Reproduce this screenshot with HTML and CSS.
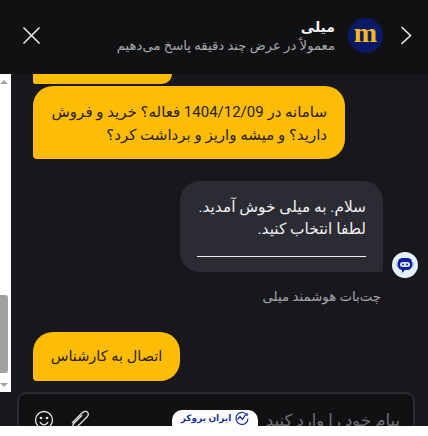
FILE: index.html
```html
<!DOCTYPE html>
<html lang="fa">

<head>
    <meta charset="UTF-8">
    <meta name="viewport" content="width=device-width, initial-scale=1.0">
    <title>میلی</title>
    <link rel="stylesheet" href="styles.css">
</head>

<body>
    <div class="widget">
        <header class="header">
            <button class="icon-button close-button" aria-label="بستن">
                <svg width="19" height="19" viewBox="0 0 19 19"><path d="M1.5 1.5 17.500 17.500M17.500 1.500 1.500 17.500" stroke="#f2f2f2" stroke-width="1.500" fill="none"/></svg>
            </button>
            <div class="agent">
                <div class="agent-name">میلی</div>
                <div class="agent-status">معمولاً در عرض چند دقیقه پاسخ می‌دهیم</div>
            </div>
            <div class="logo">m</div>
            <button class="icon-button back-button" aria-label="بازگشت">
                <svg width="12" height="19" viewBox="0 0 12 19"><path d="M1.500 1 10.500 9.500 1.500 18" stroke="#f2f2f2" stroke-width="1.500" fill="none"/></svg>
            </button>
        </header>

        <div class="body">
            <div class="scrollbar">
                <span class="arrow-up"></span>
                <div class="track"><div class="thumb"></div></div>
                <span class="arrow-down"></span>
            </div>

            <div class="messages">
                <div class="bubble-stub"></div>
                <div class="bubble user-bubble">سامانه در 1404/12/09 فعاله؟ خرید و فروش دارید؟ و میشه واریز و برداشت کرد؟</div>

                <div class="bot-row">
                    <div class="bubble bot-bubble">
                        <p>سلام. به میلی خوش آمدید. لطفا انتخاب کنید.</p>
                        <hr>
                    </div>
                    <div class="bot-avatar">
                        <svg width="18" height="18" viewBox="0 0 18 18">
                            <rect x="0.500" y="6" width="2.500" height="5" rx="1" fill="#7fa4e8"/>
                            <rect x="15" y="6" width="2.500" height="5" rx="1" fill="#7fa4e8"/>
                            <path d="M6 2h6a4.500 4.500 0 0 1 4 4.500v3a4.500 4.500 0 0 1-4.500 4.500H9l-3 3v-3a4.500 4.500 0 0 1-4-4.500v-3A4.500 4.500 0 0 1 6 2z" fill="#10209a"/>
                            <rect x="4" y="6" width="10" height="5" rx="2.500" fill="#d9e6fb"/>
                            <circle cx="7" cy="8.500" r="1" fill="#10209a"/>
                            <circle cx="11" cy="8.500" r="1" fill="#10209a"/>
                        </svg>
                    </div>
                </div>
                <div class="bot-label">چت‌بات هوشمند میلی</div>

                <button class="bubble expert-button">اتصال به کارشناس</button>
            </div>
        </div>

        <div class="composer-area">
            <div class="composer">
                <div class="composer-icons">
                    <svg width="20" height="20" viewBox="0 0 20 20" fill="none" stroke="#e4e4e4" stroke-width="1.300">
                        <circle cx="10" cy="10" r="8.500"/>
                        <circle cx="7" cy="8" r="0.700" fill="#e4e4e4"/>
                        <circle cx="13" cy="8" r="0.700" fill="#e4e4e4"/>
                        <path d="M6 12c1 2 2.500 2.800 4 2.800s3-.8 4-2.800"/>
                    </svg>
                    <svg width="20" height="22" viewBox="0 0 20 22" fill="none" stroke="#e4e4e4" stroke-width="1.300">
                        <path d="M2 13 12 3c2-2 4.500-2 5.500-.8s1 3.300-.8 5.100L7.500 16.500c-1.300 1.300-3 1.400-3.900.5s-.8-2.500.5-3.800l8-8"/>
                    </svg>
                </div>
                <div class="placeholder">پیام خود را وارد کنید</div>
            </div>
        </div>

        <footer class="footer">
            <div class="badge">
                <span>ایران بروکر</span>
                <svg width="14" height="14" viewBox="0 0 14 14" fill="none" stroke="#1a2fa8" stroke-width="1.200">
                    <path d="M12.500 5A6 6 0 1 0 13 7.500"/>
                    <path d="M2.500 8.500 5 5.500l2.500 3 2.500-4 3-2"/>
                </svg>
            </div>
        </footer>
    </div>
</body>

</html>
```

FILE: styles.css
```css
body {
    margin: 0;
    padding: 0;
    font-family: Roboto, "DejaVu Sans", sans-serif;
    background-color: #17171c;
}

.widget {
    display: flex;
    flex-direction: column;
    height: 436px;
    overflow: hidden;
    position: relative;
}

.header {
    display: flex;
    align-items: center;
    height: 74px;
    flex-shrink: 0;
    padding: 0 16px 3px 22px;
    box-sizing: border-box;
    background-color: #111114;
}

.icon-button {
    display: flex;
    padding: 0;
    border: none;
    background: none;
}

.agent {
    margin-left: auto;
    direction: rtl;
}

.agent-name {
    color: #f4f4f4;
    font-size: 14px;
    font-weight: bold;
    line-height: 20px;
}

.agent-status {
    color: #a8a8ac;
    font-size: 13.200px;
    line-height: 17px;
}

.logo {
    width: 35px;
    height: 35px;
    flex-shrink: 0;
    margin: 0 17px 0 13px;
    border-radius: 50%;
    background-color: #0b1a66;
    color: #f5b921;
    font-family: "Liberation Serif", serif;
    font-size: 28px;
    font-weight: bold;
    line-height: 30px;
    text-align: center;
}

.body {
    display: flex;
    height: 318px;
    flex-shrink: 0;
}

.scrollbar {
    display: flex;
    flex-direction: column;
    width: 11px;
    flex-shrink: 0;
    background-color: #fff;
}

.arrow-up,
.arrow-down {
    width: 0;
    margin: 6px 0 0;
    border-left: 4px solid transparent;
    border-right: 4px solid transparent;
}

.arrow-up {
    border-bottom: 4px solid #a3a3a3;
}

.arrow-down {
    margin: 6px 0 5px;
    border-top: 4px solid #a3a3a3;
}

.track {
    flex: 1;
    display: flex;
    flex-direction: column;
    justify-content: flex-end;
    padding-bottom: 4px;
}

.thumb {
    width: 8px;
    height: 78px;
    border-radius: 0 3px 3px 0;
    background-color: #a0a0a0;
}

.messages {
    flex: 1;
    display: flex;
    flex-direction: column;
    align-items: flex-start;
    padding-left: 22px;
    direction: ltr;
}

.bubble-stub {
    width: 139px;
    height: 10px;
    border-radius: 0 0 14px 4px;
    background-color: #ffbc05;
}

.bubble {
    box-sizing: border-box;
    direction: rtl;
    font-family: inherit;
    font-size: 15.400px;
    line-height: 23px;
}

.user-bubble {
    width: 312px;
    height: 73px;
    margin-top: 2px;
    padding: 15px 18px 13px 6px;
    border-radius: 20px 20px 20px 4px;
    background-color: #ffbc05;
    color: #26221a;
    font-size: 15px;
}

.bot-row {
    display: flex;
    align-items: flex-end;
    margin: 22px 0 0 147px;
}

.bot-bubble {
    width: 203px;
    height: 91px;
    padding: 15px 17px;
    border-radius: 20px 20px 3px 20px;
    background-color: #2b2b34;
    color: #f0f0f2;
    line-height: 22px;
}

.bot-bubble p {
    margin: 0;
}

.bot-bubble hr {
    margin: 16px 0 0;
    border: none;
    border-top: 1px solid #f0f0f0;
}

.bot-avatar {
    display: flex;
    align-items: center;
    justify-content: center;
    width: 26px;
    height: 26px;
    margin: 0 0 -6px 9px;
    border-radius: 50%;
    background-color: #e3f1fc;
}

.bot-label {
    width: 348px;
    margin-top: 17px;
    direction: rtl;
    color: #a5a5ab;
    font-size: 13.300px;
    line-height: 16px;
}

.expert-button {
    width: 147px;
    height: 49px;
    margin-top: 27px;
    padding: 0;
    border: none;
    border-radius: 20px 20px 20px 4px;
    background-color: #ffbc05;
    color: #26221a;
    font-size: 14.500px;
    text-align: center;
}

.composer-area {
    flex: 1;
    min-height: 0;
    overflow: hidden;
    padding: 0 13px 0 17px;
}

.composer {
    display: flex;
    justify-content: space-between;
    height: 60px;
    box-sizing: border-box;
    padding: 16px 13px 0 15px;
    border: 2px solid #2b2b2f;
    border-radius: 9px;
    background-color: #111114;
}

.composer-icons {
    display: flex;
    align-items: flex-start;
    gap: 16px;
}

.placeholder {
    direction: rtl;
    color: #6f6f74;
    font-size: 16.500px;
    line-height: 22px;
}

.footer {
    height: 10px;
    flex-shrink: 0;
    position: relative;
    background-color: #fff;
}

/* sits over the bottom edge of the composer */
.badge {
    position: absolute;
    left: 172px;
    bottom: 10px;
    display: flex;
    align-items: center;
    justify-content: center;
    gap: 4px;
    width: 86px;
    height: 16px;
    border-radius: 10px 10px 0 0;
    background-color: #fff;
    color: #1a2fa8;
    font-size: 9px;
    font-weight: bold;
}
```
